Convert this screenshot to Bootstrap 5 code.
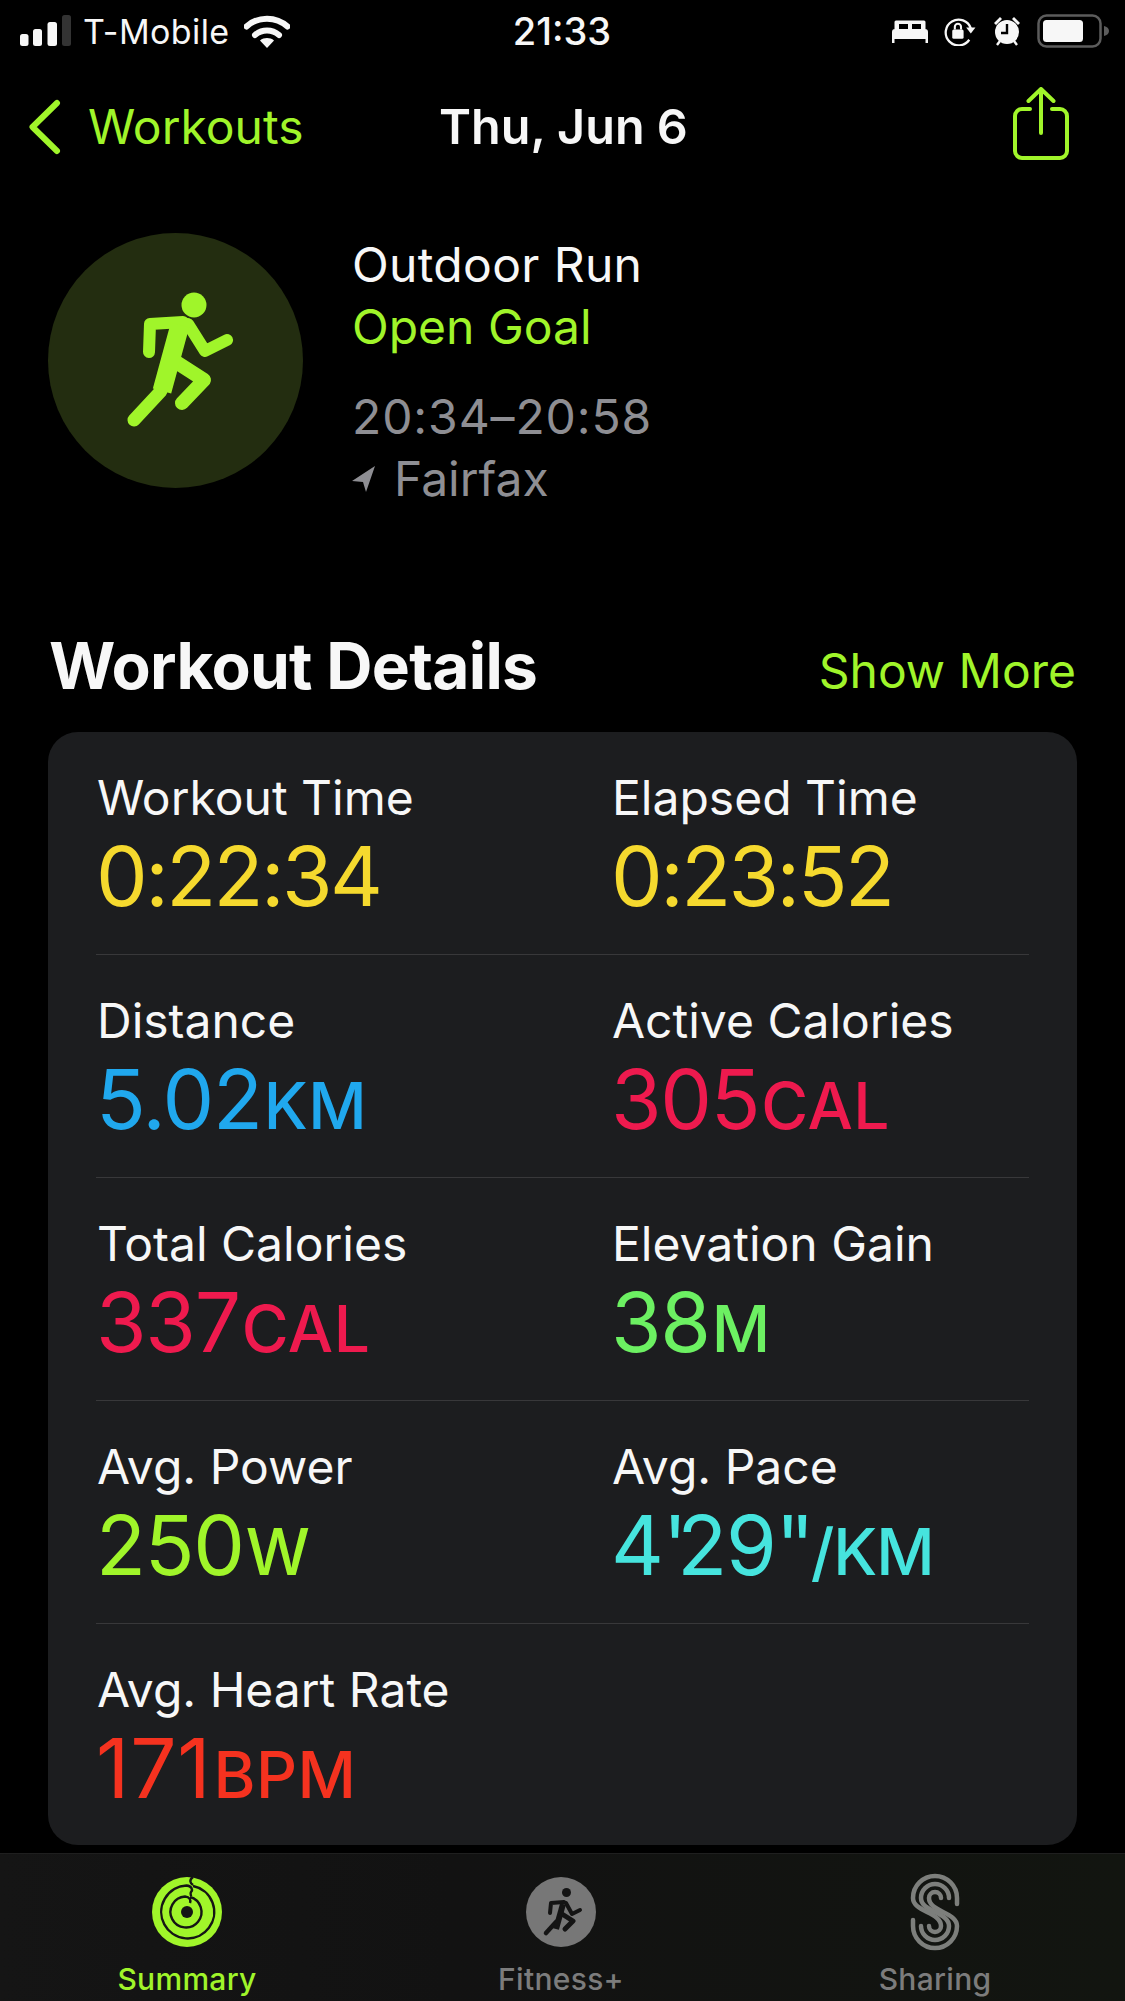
<!DOCTYPE html>
<html lang="en">
<head>
  <meta charset="UTF-8">
  <title>Workout Details</title>
  <meta name="viewport" content="width=device-width, initial-scale=1">
  <link href="https://cdn.jsdelivr.net/npm/bootstrap@5.3.3/dist/css/bootstrap.min.css" rel="stylesheet">
  <style>
    body {
      background-color: #000;
      color: #f7f7f7;
      font-family: "Inter", "Liberation Sans", sans-serif;
      width: 1125px;
      height: 2001px;
      overflow: hidden;
    }
    .lime { color: #a0f52a; }
    .grey-text { color: #8e8e93; }

    .status-bar { height: 62px; padding-left: 20px; padding-right: 16px; font-size: 34px; }
    .status-left { width: 485px; }
    .status-time { width: 114px; text-align: center; font-weight: 500; font-size: 38px; }
    .status-right { flex: 1; }
    .carrier { margin-left: 12px; margin-right: 14px; letter-spacing: .4px; }

    .top-nav { height: 130px; font-size: 48px; padding-left: 28px; padding-right: 56px; }
    .nav-back { width: 411px; }
    .nav-back span { margin-left: 2px; }
    .nav-title { font-weight: 600; font-size: 48.5px; flex: 1; }
    .share-icon { margin-bottom: 7px; }

    .hero { margin-top: 41px; padding-left: 48px; height: 255px; }
    .hero-disc { width: 255px; height: 255px; flex: none; }
    .hero-text { margin-left: 49px; padding-top: 1px; font-size: 48px; line-height: 62px; }
    .hero-text .gap-top { margin-top: 28px; letter-spacing: .9px; }
    .run-name { letter-spacing: .35px; }
    .place-arrow { margin-right: 18px; }

    .section-head { margin-top: 133px; padding-left: 49px; padding-right: 49px; height: 90px; }
    .section-title { font-size: 64px; font-weight: 700; margin: 0; line-height: 90px; letter-spacing: -.7px; }
    .section-link { font-size: 48px; padding-top: 10px; }

    .metrics-panel { margin: 21px 48px 0; height: 1113px; background: #1c1d1f; border-radius: 30px; }
    .metric-row { margin: 0 48px; height: 223px; padding-top: 36px; border-bottom: 1px solid #38383a; }
    .metric-row:last-child { border-bottom: 0; }
    .metric-cell { width: 515px; flex: none; padding-left: 1px; }
    .metric-cell + .metric-cell { width: 418px; }
    .metric-label { font-size: 48px; line-height: 60px; }
    .metric-value { font-size: 82px; line-height: 98px; white-space: nowrap; margin-left: -1px; letter-spacing: -1.3px; }
    .metric-value.tight { letter-spacing: -2.6px; }
    .metric-value.wide { letter-spacing: .8px; }
    .metric-unit { font-size: 64px; font-weight: 500; margin-left: 2px; letter-spacing: .5px; }
    .ticks { letter-spacing: -10px; }
    .pace-unit { margin-left: 6px; letter-spacing: -1px; }
    .c-yellow { color: #f5d92e; }
    .c-blue { color: #20a8ee; }
    .c-pink { color: #ee1a4e; }
    .c-mint { color: #6cf062; }
    .c-lime { color: #a0f52a; }
    .c-cyan { color: #46e4de; }
    .c-red { color: #f5321f; }

    .tab-strip { margin-top: 8px; height: 148px; padding-right: 3px; background: linear-gradient(90deg, #151515, #121212 40%, #121510); border-top: 1px solid #1f1f1f; }
    .tab-icon { height: 80px; margin-top: 18px; display: block; margin-left: auto; margin-right: auto; }
    .tab-label { font-size: 30px; font-weight: 500; line-height: 36px; margin-top: 9px; letter-spacing: .3px; color: #7c7c7c; }
    .tab-label.on { color: #a0f52a; }
  </style>
</head>
<body>

<!-- status bar -->
<div class="status-bar d-flex align-items-center">
  <div class="status-left d-flex align-items-center">
    <svg width="51" height="32" viewBox="0 0 51 32">
      <rect x="0" y="19" width="8.5" height="12" rx="2.5" fill="#f7f7f7"/>
      <rect x="13" y="14" width="9" height="17" rx="2.5" fill="#f7f7f7"/>
      <rect x="27.5" y="7" width="9.5" height="24" rx="2.5" fill="#f7f7f7"/>
      <rect x="42" y="0" width="9" height="31" rx="2.5" fill="#333"/>
    </svg>
    <span class="carrier">T-Mobile</span>
    <svg width="46" height="33" viewBox="0 0 46 33">
      <path d="M2.5 11.5C14 1 32 1 43.5 11.500" fill="none" stroke="#f7f7f7" stroke-width="6" stroke-linecap="round"/>
      <path d="M11 20c7-6 17-6 24 0" fill="none" stroke="#f7f7f7" stroke-width="6" stroke-linecap="round"/>
      <path d="M16 25.500c4-3.200 10-3.200 14 0L23 33z" fill="#f7f7f7"/>
    </svg>
  </div>
  <div class="status-time">21:33</div>
  <div class="status-right d-flex align-items-center justify-content-end">
    <svg width="36" height="24" viewBox="0 0 36 24" class="me-3">
      <path d="M4 1.500h28a1.500 1.500 0 0 1 1.500 1.500v7H2.500V3A1.500 1.500 0 0 1 4 1.500z" fill="#f7f7f7"/>
      <rect x="7" y="5" width="9" height="5" fill="#000"/>
      <rect x="20" y="5" width="9" height="5" fill="#000"/>
      <path d="M0 13c0-2 1-3 3-3h30c2 0 3 1 3 3v11h-2.500v-4h-31v4H0z" fill="#f7f7f7"/>
    </svg>
    <svg width="33" height="29" viewBox="0 0 32 28" class="me-3">
      <path d="M24.500 22A12.500 12.500 0 1 1 26 11" fill="none" stroke="#f7f7f7" stroke-width="2.200"/>
      <path d="M21.500 10h9L26 16z" fill="#f7f7f7"/>
      <rect x="8" y="12" width="11" height="9" rx="1.500" fill="#f7f7f7"/>
      <path d="M10.500 12V9.500a3 3 0 0 1 6 0V12" fill="none" stroke="#f7f7f7" stroke-width="2"/>
    </svg>
    <svg width="28" height="30" viewBox="0 0 28 30" class="me-3">
      <circle cx="14" cy="16" r="12" fill="#f7f7f7"/>
      <path d="M14 8v9H8" fill="none" stroke="#000" stroke-width="2.400"/>
      <path d="M1 7l6-6 2 2-6 6zM27 7l-6-6-2 2 6 6z" fill="#f7f7f7"/>
      <path d="M4 29l3-4M24 29l-3-4" stroke="#f7f7f7" stroke-width="2.400"/>
    </svg>
    <svg width="72" height="34" viewBox="0 0 72 34">
      <rect x="1.500" y="1.500" width="62" height="31" rx="8" fill="none" stroke="#5c5c5c" stroke-width="2.500"/>
      <rect x="6" y="6" width="40" height="22" rx="3.500" fill="#f7f7f7"/>
      <path d="M67 12c3 .8 5 2.500 5 5s-2 4.200-5 5z" fill="#5c5c5c"/>
    </svg>
  </div>
</div>

<!-- nav -->
<div class="top-nav d-flex align-items-center">
  <div class="nav-back d-flex align-items-center lime">
    <svg width="34" height="56" viewBox="0 0 34 56" class="me-4">
      <path d="M29 4L4.500 28 29 52" fill="none" stroke="#a0f52a" stroke-width="6" stroke-linecap="round" stroke-linejoin="round"/>
    </svg>
    <span>Workouts</span>
  </div>
  <div class="nav-title">Thu, Jun 6</div>
  <svg class="share-icon" width="56" height="73" viewBox="0 0 56 73">
    <path d="M17 22H9a7 7 0 0 0-7 7v35a7 7 0 0 0 7 7h38a7 7 0 0 0 7-7V29a7 7 0 0 0-7-7h-8" fill="none" stroke="#a0f52a" stroke-width="4" stroke-linecap="round"/>
    <path d="M28 46V3M15.500 14L28 2l12.500 12" fill="none" stroke="#a0f52a" stroke-width="4" stroke-linecap="round" stroke-linejoin="round"/>
  </svg>
</div>

<!-- workout summary -->
<div class="hero d-flex">
  <svg class="hero-disc" viewBox="48 233 255 255">
    <circle cx="175.500" cy="360.500" r="127.500" fill="#232d10"/>
    <circle cx="194" cy="305" r="12.500" fill="#a0f52a"/>
    <g fill="none" stroke="#a0f52a" stroke-linecap="round" stroke-linejoin="round">
      <path d="M183 322l-33 2-1 28M188 324l17 27 22-11" stroke-width="12"/>
      <path d="M134 420l27-29" stroke-width="13"/>
      <path d="M176 362l28 18-22 23" stroke-width="14"/>
      <path d="M180 325l-18 66" stroke-width="19" stroke-linecap="butt"/>
    </g>
  </svg>
  <div class="hero-text">
    <div class="run-name">Outdoor Run</div>
    <div class="lime">Open Goal</div>
    <div class="grey-text gap-top">20:34–20:58</div>
    <div class="grey-text d-flex align-items-center">
      <svg width="24" height="26" viewBox="0 0 24 26" class="place-arrow">
        <path d="M23 0L0 15l11 1 3 10z" fill="#8e8e93"/>
      </svg>
      <span>Fairfax</span>
    </div>
  </div>
</div>

<div class="section-head d-flex justify-content-between align-items-center">
  <h2 class="section-title">Workout Details</h2>
  <div class="section-link lime">Show More</div>
</div>

<!-- metrics -->
<div class="metrics-panel">
  <div class="metric-row d-flex">
    <div class="metric-cell"><div class="metric-label">Workout Time</div><div class="metric-value tight c-yellow">0:22:34</div></div>
    <div class="metric-cell"><div class="metric-label">Elapsed Time</div><div class="metric-value tight c-yellow">0:23:52</div></div>
  </div>
  <div class="metric-row d-flex">
    <div class="metric-cell"><div class="metric-label">Distance</div><div class="metric-value c-blue">5.02<span class="metric-unit">KM</span></div></div>
    <div class="metric-cell"><div class="metric-label">Active Calories</div><div class="metric-value c-pink">305<span class="metric-unit">CAL</span></div></div>
  </div>
  <div class="metric-row d-flex">
    <div class="metric-cell"><div class="metric-label">Total Calories</div><div class="metric-value c-pink">337<span class="metric-unit">CAL</span></div></div>
    <div class="metric-cell"><div class="metric-label">Elevation Gain</div><div class="metric-value c-mint">38<span class="metric-unit">M</span></div></div>
  </div>
  <div class="metric-row d-flex">
    <div class="metric-cell"><div class="metric-label">Avg. Power</div><div class="metric-value c-lime">250<span class="metric-unit">W</span></div></div>
    <div class="metric-cell"><div class="metric-label">Avg. Pace</div><div class="metric-value c-cyan">4<span class="ticks">'</span>29<span class="ticks">''</span><span class="metric-unit pace-unit">/KM</span></div></div>
  </div>
  <div class="metric-row d-flex">
    <div class="metric-cell"><div class="metric-label">Avg. Heart Rate</div><div class="metric-value wide c-red">171<span class="metric-unit">BPM</span></div></div>
  </div>
</div>

<!-- tabs -->
<div class="tab-strip row g-0 text-center">
  <div class="col-4">
    <svg class="tab-icon" width="72" height="80" viewBox="-36 -40 72 80">
      <circle cx="0" cy="0" r="35" fill="#a0f52a"/>
      <g fill="none" stroke="#151515" stroke-width="2.400">
        <path d="M6 -35c-4 3-3 6 0 8"/>
        <path d="M6 -26A26.500 26.500 0 1 1 -0.500 -26.500C5 -26 6 -22 4 -20c-1 1.500 0 3 0 4"/>
        <path d="M3 -15A15.500 15.500 0 1 1 -2 -15.500C3 -15 4 -12 3 -9"/>
      </g>
      <circle cx="0" cy="0" r="6" fill="#151515"/>
    </svg>
    <div class="tab-label on">Summary</div>
  </div>
  <div class="col-4">
    <svg class="tab-icon" width="72" height="80" viewBox="-36 -40 72 80">
      <circle cx="0" cy="0" r="35" fill="#777"/>
      <circle cx="5.500" cy="-19.500" r="4.500" fill="#141414"/>
      <g fill="none" stroke="#141414" stroke-linecap="round" stroke-linejoin="round">
        <path d="M3 -10l-13 1-1 10M5 -9l6 11 8-4" stroke-width="4"/>
        <path d="M-15 21l10-11" stroke-width="4.500"/>
        <path d="M1 2l11 7-8 8" stroke-width="5"/>
        <path d="M2 -8l-7 25" stroke-width="6" stroke-linecap="butt"/>
      </g>
    </svg>
    <div class="tab-label">Fitness+</div>
  </div>
  <div class="col-4">
    <svg class="tab-icon" width="50" height="80" viewBox="-1 -2 50 80">
      <g fill="none" stroke="#7d7f7c" stroke-width="4.500" stroke-linecap="round">
        <path d="M46 30V24A22 22 0 0 0 2 24C2 38 30 38 30 52A6 6 0 0 1 18 52"/>
        <path d="M38 24A14 14 0 0 0 10 24C10 38 38 38 38 52A14 14 0 0 1 10 52"/>
        <path d="M30 24A6 6 0 0 0 18 24C18 38 46 38 46 52A22 22 0 0 1 2 52V46"/>
      </g>
    </svg>
    <div class="tab-label">Sharing</div>
  </div>
</div>

<script src="https://cdn.jsdelivr.net/npm/bootstrap@5.3.3/dist/js/bootstrap.bundle.min.js"></script>
</body>
</html>
